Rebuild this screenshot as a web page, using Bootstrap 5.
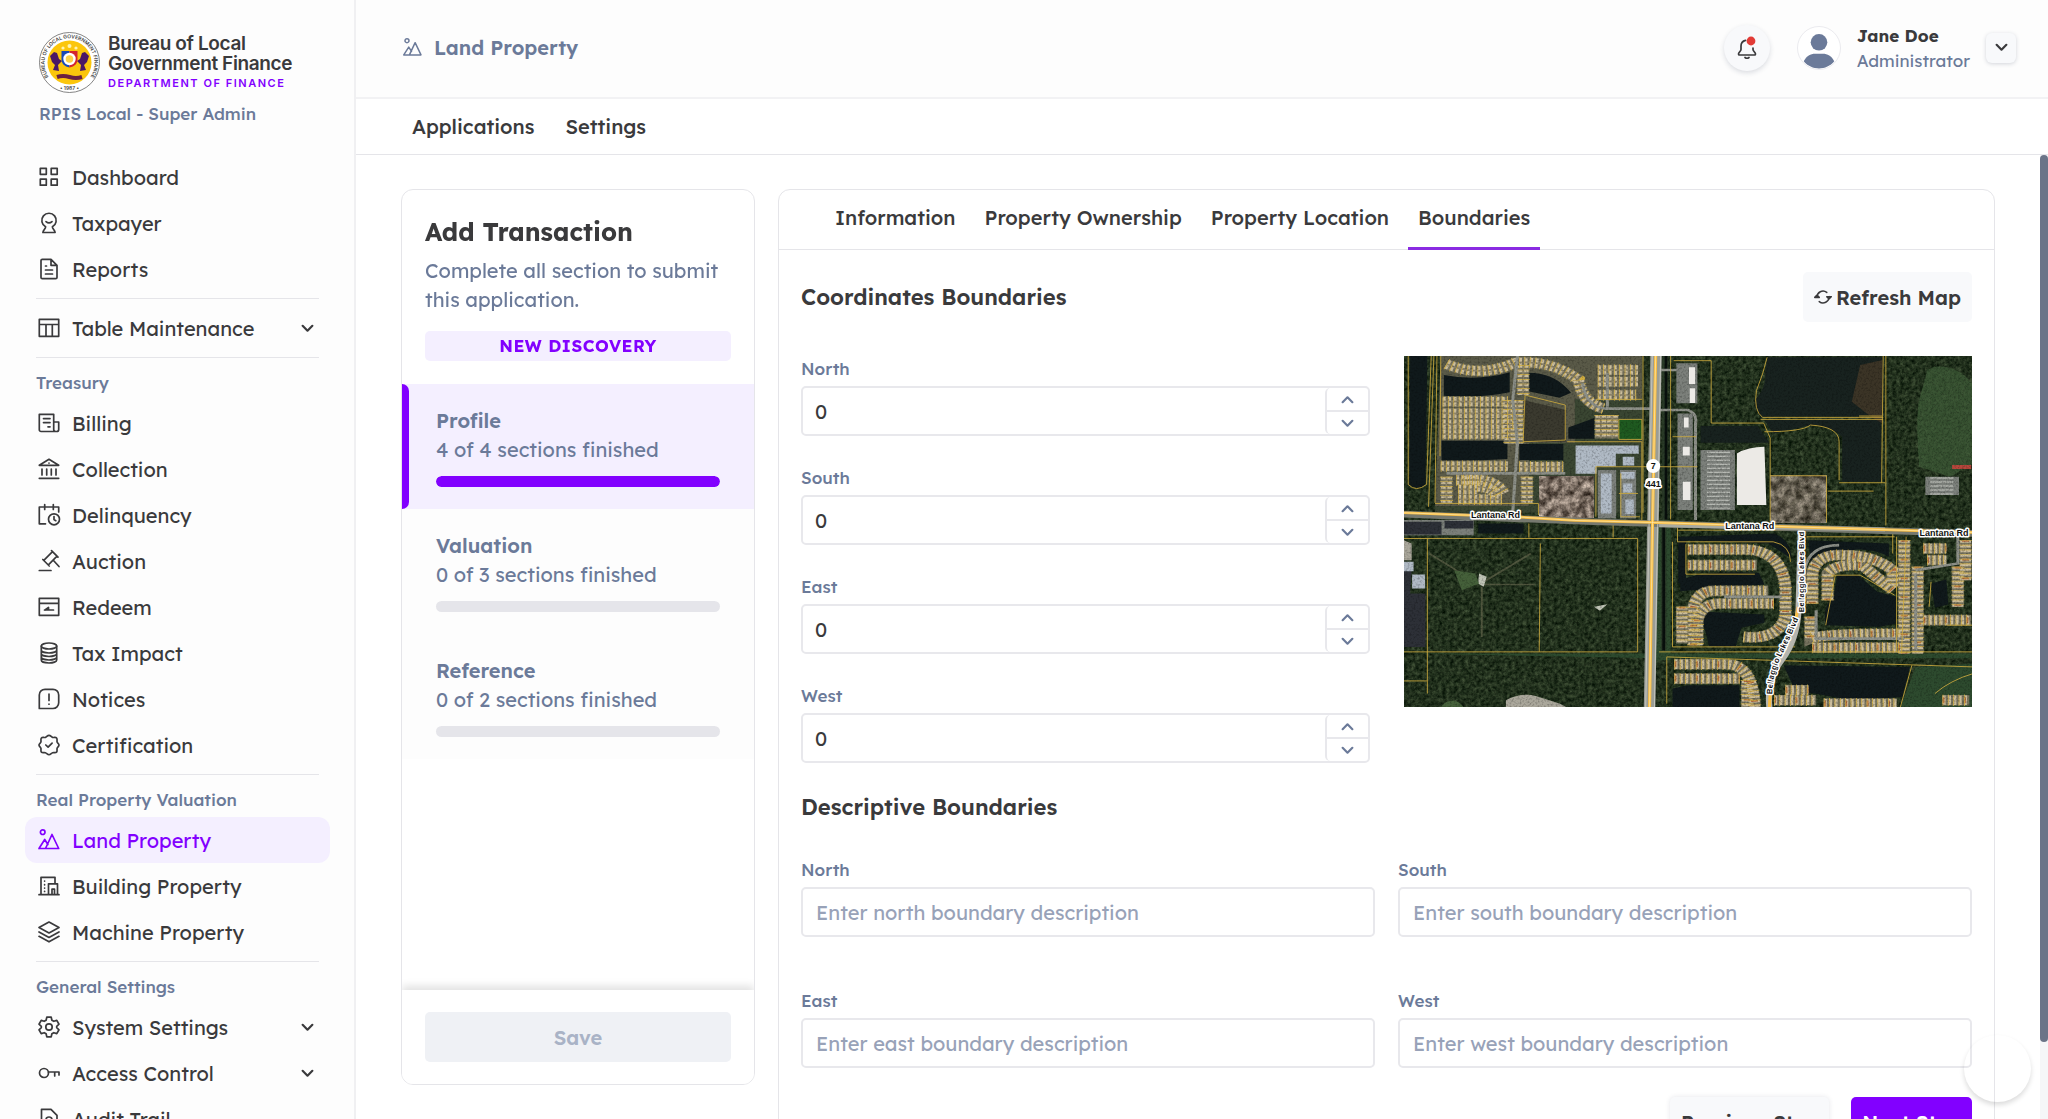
<!DOCTYPE html>
<html lang="en">
<head>
<meta charset="utf-8">
<meta name="viewport" content="width=device-width, initial-scale=1">
<title>Land Property</title>
<link href="https://cdn.jsdelivr.net/npm/bootstrap@5.3.0/dist/css/bootstrap.min.css" rel="stylesheet">
<style>
:root{--ink:#3a3a3c;--slate:#6b7a99;--violet:#8200ff;--tint:#f4efff;--line:#e5e5e9;--soft:#fdfdfd}
body{font-family:Lexend,Inter,"Liberation Sans",sans-serif;font-size:20px;line-height:29px;color:var(--ink);background:#fff}
button{font-family:inherit}
.shell{height:100vh}
.ico{width:24px;height:24px;flex:none;fill:none;stroke:currentColor;stroke-width:1.7;stroke-linecap:round;stroke-linejoin:round}
/* sidebar */
.side{width:356px;flex:none;background:var(--soft);border-right:2px solid #f0f0f2;overflow:hidden;padding:32px 24px 0 25px}
.brand{padding-left:14px;height:122px}
.brand-name{font-family:Inter,"Liberation Sans",sans-serif;font-size:19px;line-height:20px;font-weight:600;letter-spacing:-.02em;white-space:nowrap}
.brand-sub{font-family:Inter,"Liberation Sans",sans-serif;font-size:11px;line-height:18px;font-weight:600;letter-spacing:.14em;color:var(--violet);white-space:nowrap}
.role{font-size:17px;line-height:22px;font-weight:500;color:var(--slate);margin-top:10px}
.side-link{height:46px;padding:0 16px 0 12px;gap:11px;border-radius:12px;color:var(--ink);text-decoration:none;font-weight:400;border:0;background:none;width:100%;text-align:left}
.side-link.on{background:var(--tint);color:var(--violet)}
.side-rule{height:1px;margin:6px 11px;background:var(--line)}
.side-label{font-size:17px;line-height:26px;font-weight:500;color:var(--slate);padding:6px 11px 4px}
.chev{width:13px;height:13px;stroke-width:4}
/* top */
.top{height:99px;flex:none;background:var(--soft);border-bottom:2px solid #f2f2f4;padding:0 32px 2px 46px}
.top-ico{width:21px;height:21px;margin-right:11px;color:var(--slate)}
.top-title{font-weight:600;color:var(--slate)}
.round{width:46px;height:46px;border-radius:50%;border:0;background:#f8f9fb;box-shadow:0 2px 5px rgba(40,50,80,.16);color:var(--ink)}
.face{width:44px;height:44px;border-radius:50%;border:1px solid #ebebef;background:#fff;overflow:hidden;margin:0 16px 0 27px}
.who{font-size:17px;line-height:25px}
.mini{width:30px;height:30px;border-radius:6px;border:0;background:#f8f9fb;box-shadow:0 1px 4px rgba(40,50,80,.2);color:var(--ink)}
.sub{height:56px;flex:none;border-bottom:1px solid var(--line);padding:0 56px;gap:31px}
.sub a,.tabs a{color:var(--ink);text-decoration:none;font-weight:500}
/* body */
.view{padding:34px 45px 34px;gap:23px;overflow-y:auto;scrollbar-width:none}
.view::-webkit-scrollbar{display:none}
.rail{width:8px;flex:none;background:#f5f6f8}
.thumb{height:92%;border-radius:4px;background:#6b7488}
.panel{background:#fff;border:1px solid var(--line);border-radius:12px}
.steps{width:354px;flex:none;height:100%;position:sticky;top:0;overflow:hidden}
.steps-head{padding:26px 23px 23px}
.steps-head h1{font-size:25px;line-height:32px;font-weight:700;margin:0 0 8px}
.muted{color:var(--slate)}
.pill{margin-top:17px;height:30px;line-height:30px;border-radius:5px;background:var(--tint);color:var(--violet);font-size:17px;font-weight:700;letter-spacing:.03em;text-align:center}
.step{height:125px;padding:22px 34px;background:var(--soft);color:var(--slate);text-decoration:none;display:block;position:relative}
.step:hover{color:var(--slate)}
.step.on{background:var(--tint)}
.step.on::before{content:"";position:absolute;left:0;top:0;bottom:0;width:7px;background:var(--violet);border-radius:0 7px 7px 0}
.step b{font-weight:600;display:block}
.meter{height:11px;margin-top:12px;border-radius:6px;background:#e5e5ea}
.meter .progress-bar{background:var(--violet);border-radius:6px}
.steps-foot{padding:22px 23px;box-shadow:0 -4px 8px rgba(0,0,0,.12);position:relative;background:#fff}
.act{height:50px;border:0;border-radius:5px;font-weight:600;font-size:20px;padding:0 11px;color:var(--ink);background:#f8f9fb;white-space:nowrap}
.act.save{background:#eff1f5;color:#a9b3c6}
.sync{width:18px;height:18px;stroke-width:2}
.tabs{height:60px;border-bottom:1px solid var(--line);padding:0 46px;gap:9px}
.tabs a{height:60px;line-height:56px;padding:0 10px;border-bottom:3px solid transparent}
.tabs a.on{border-color:#8a2be2}
.form-pane{padding:22px}
.head{font-size:22px;line-height:30px;font-weight:600;margin:0}
.head-next{margin-top:29px}
.lbl{display:block;font-size:17px;line-height:26px;font-weight:500;color:var(--slate);margin-bottom:4px}
.box,.box:focus{height:50px;border:2px solid #e8e8ec;border-radius:5px;font-size:20px;color:var(--ink);padding:0 13px;box-shadow:none}
.box::placeholder{color:#98a2b8;opacity:1}
.num input{border:0;outline:0;height:100%;appearance:textfield;-moz-appearance:textfield;min-width:0;background:none;color:var(--ink)}
.num input::-webkit-inner-spin-button{appearance:none;display:none}
.box.num{padding:0 0 0 12px}
.spin{width:43px;flex:none;border-left:2px solid #e8e8ec;border-radius:5px 0 0 5px}
.spin button{border:0;background:none;color:var(--slate);padding:0}
.spin button+button{border-top:2px solid #e8e8ec}
.coords{gap:34px;margin-top:34px}
.coords>*{flex:1 1 0;min-width:0}
.stack{gap:29px}
.desc{display:grid;grid-template-columns:1fr 1fr;column-gap:23px;row-gap:51px;margin-top:35px}
.ends{gap:22px;margin-top:29px}
.next{background:var(--violet);color:#fff;min-width:118px}
.prev{box-shadow:0 0 5px rgba(40,50,80,.12);min-width:158px}
.bubble{position:fixed;right:17px;bottom:17px;width:67px;height:67px;border-radius:50%;border:0;background:transparent;box-shadow:0 3px 5px rgba(0,0,0,.14)}
/* map */
.map{width:100%;display:block;height:auto}
.map .lot{fill:none;stroke:#c9a83e;stroke-width:2.4}
.map .water{fill:#10191b}
.map text{font-family:"Liberation Sans",Arial,sans-serif;font-weight:700;font-size:9px;fill:#111;stroke:#fff;stroke-width:3px;paint-order:stroke;stroke-linejoin:round}
.map .street{font-size:8px}
</style>
<script src="https://cdn.jsdelivr.net/npm/bootstrap@5.3.0/dist/js/bootstrap.bundle.min.js"></script>
</head>
<body>
<svg class="d-none" aria-hidden="true">
 <symbol id="i-dash" viewBox="0 0 24 24"><path d="M3.3 3.3h6v6h-6zM14.2 3.3h6v6h-6zM3.3 14.2h6v6h-6zM14.2 14.2h6v6h-6z"/></symbol>
 <symbol id="i-tax" viewBox="0 0 24 24"><path d="M8.6 15.8a7.2 7.2 0 1 1 6.8 0c0 2.2 2.2 2.5 2.7 5.7H5.900c.5-3.200 2.700-3.500 2.700-5.700zM9 10.600q3 2.600 6 0"/></symbol>
 <symbol id="i-file" viewBox="0 0 24 24"><path d="M14 2.300H5.300a1.300 1.300 0 0 0-1.300 1.300v16.800a1.300 1.300 0 0 0 1.300 1.300h13.400a1.300 1.300 0 0 0 1.300-1.300V8.300zM14 2.300v6h6M8.500 9h1M8.500 13h7M8.500 17h7"/></symbol>
 <symbol id="i-table" viewBox="0 0 24 24"><path d="M2.300 3.300h19.400v17H2.300zM2.300 8.500h19.400M9 8.500v11.800M15.300 8.500v11.800"/></symbol>
 <symbol id="i-bill" viewBox="0 0 24 24"><path d="M17 20.500H4a1.700 1.700 0 0 1-1.700-1.700V3.300h14.400v14.900M16.700 11h5v7.500a2 2 0 0 1-2 2h-1a2 2 0 0 1-2-2zM6.500 7.600h6.500M6.500 11.600h6.500M11 15.800h2"/></symbol>
 <symbol id="i-bank" viewBox="0 0 24 24"><path d="M2.300 8.300 12 2.300l9.700 6zM2.300 21.300h19.400M5 12v6M9.700 12v6M14.300 12v6M19 12v6M12 6v.1"/></symbol>
 <symbol id="i-cal" viewBox="0 0 24 24"><path d="M8.500 20.800H2.300V4h19.400v5M7.700 1.500v5M16.300 1.500v5M2.300 4v3"/><circle cx="17" cy="16.300" r="5.500"/><path d="M17 13.500v3l1.800 1.200"/></symbol>
 <symbol id="i-gavel" viewBox="0 0 24 24"><path d="M2.300 21.500H14M14.500 1.700l6.500 6.500M5.800 10.500l6.500 6.500M15.500 2.700l-8.700 8.700M20 7.200l-8.600 8.600M16.500 11.500l5.500 6"/></symbol>
 <symbol id="i-redeem" viewBox="0 0 24 24"><path d="M2.300 3.300h19.400v17H2.300zM2.300 8.300h19.400M7.500 15h9M8 15l3.500-2.500V15"/></symbol>
 <symbol id="i-coins" viewBox="0 0 24 24"><ellipse cx="12" cy="5" rx="7.700" ry="3"/><path d="M4.300 5v14c0 1.700 3.400 3 7.700 3s7.700-1.300 7.700-3V5M4.300 9c0 1.700 3.400 3 7.700 3s7.700-1.300 7.700-3M4.300 12.500c0 1.700 3.400 3 7.700 3s7.700-1.300 7.700-3M4.300 16c0 1.700 3.400 3 7.700 3s7.700-1.300 7.700-3"/></symbol>
 <symbol id="i-note" viewBox="0 0 24 24"><path d="M2.300 21.500V8a5.700 5.700 0 0 1 5.700-5.700h8A5.700 5.700 0 0 1 21.700 8v7.800a5.700 5.700 0 0 1-5.700 5.700zM12 7v6.500M12 17v.2"/></symbol>
 <symbol id="i-cert" viewBox="0 0 24 24"><path d="M12 2.300c1.600 0 2.300 1.700 3.600 2.100 1.500.4 3-.5 4 .6s.1 2.600.5 4c.4 1.300 1.900 1.600 1.900 3s-1.500 1.900-1.900 3.200c-.4 1.400.5 2.900-.5 3.900s-2.500.2-4 .6c-1.300.4-2 2-3.600 2s-2.300-1.600-3.600-2c-1.500-.4-3 .4-4-.6s-.1-2.500-.5-3.900C3.500 13.900 2 13.500 2 12s1.500-1.700 1.900-3c.4-1.400-.5-2.900.5-4s2.500-.2 4-.6C9.700 4 10.400 2.300 12 2.300zM8.800 12l2.300 2.200 4-4"/></symbol>
 <symbol id="i-land" viewBox="0 0 24 24"><circle cx="5.700" cy="4.200" r="2.300"/><path d="M2 20.500l5.700-9 3.200 5M8.500 20.500l6.500-14 6.700 14zM2 20.500h10"/></symbol>
 <symbol id="i-build" viewBox="0 0 24 24"><path d="M2 20.700h20M4 20.700V3.300h14v6M11.500 20.700V9.800h9v10.900M15 20.700v-5.500h2.500v5.500M7.600 7v.1M7.600 10.700v.1M7.600 14v.1M7.600 17.300v.1"/></symbol>
 <symbol id="i-layers" viewBox="0 0 24 24"><path d="M12 2l10 5.500-10 5.500L2 7.500zM2 12l10 5.500L22 12M2 16.300l10 5.500 10-5.500"/></symbol>
 <symbol id="i-gear" viewBox="0 0 24 24"><circle cx="12" cy="12" r="3.200"/><path d="M9.800 2.200h4.400l.7 3 1.900 1.100 3-.9 2.200 3.800-2.300 2.100v1.400l2.300 2.100-2.200 3.800-3-.9-1.900 1.100-.7 3H9.800l-.7-3-1.900-1.100-3 .9L2 14.800l2.300-2.100v-1.400L2 9.200l2.200-3.800 3 .9 1.900-1.100z"/></symbol>
 <symbol id="i-key" viewBox="0 0 24 24"><circle cx="7" cy="12" r="4.500"/><path d="M11.500 11H22v3M17.700 11v4"/></symbol>
 <symbol id="i-audit" viewBox="0 0 24 24"><path d="M14 2.300H4.500v19.400H20V8.300z"/><circle cx="12" cy="13" r="3"/></symbol>
 <symbol id="i-down" viewBox="0 0 24 24"><path d="M3 7l9 9 9-9"/></symbol>
 <symbol id="i-up" viewBox="0 0 24 24"><path d="M3 17l9-9 9 9"/></symbol>
 <symbol id="i-sync" viewBox="0 0 24 24"><path d="M4 12.500a8 8 0 0 1 13-6.600M20 11.500a8 8 0 0 1-13 6.600M1 12.500l3-3 3 3zM17 11.500l3 3 3-3z"/></symbol>
</svg>

<div class="shell d-flex overflow-hidden">
 <aside class="side">
  <div class="brand">
   <div class="d-flex align-items-center gap-2">
    <svg width="61" height="61" viewBox="0 0 61 61" role="img" aria-label="Bureau seal">
     <defs><path id="ringTop" d="M14 50A25 25 0 1 1 47 50"/></defs>
     <circle cx="30.500" cy="30.500" r="30" fill="#fff" stroke="#666" stroke-width=".8"/>
     <circle cx="30.500" cy="30.500" r="22" fill="#fbc60c"/>
     <g font-family="Inter,sans-serif" font-weight="600" fill="#444"><text font-size="5"><textPath href="#ringTop" startOffset="50%" text-anchor="middle">BUREAU OF LOCAL GOVERNMENT FINANCE</textPath></text><text x="30.500" y="58" font-size="5" text-anchor="middle">• 1987 •</text></g>
     <g fill="#fff3b0"><circle cx="30.500" cy="14" r="2"/><circle cx="24" cy="16" r="1.600"/><circle cx="37" cy="16" r="1.600"/></g>
     <path fill="#4a1766" d="M11 24l4-4 3 1 2 6 3 2-4 4 1 6-6-1 2-5-3-3zM50 24l-4-4-3 1-2 6-3 2 4 4-1 6 6-1-2-5 3-3z"/>
     <path fill="#1849b8" d="M22.500 19h8v16.500c-5-1-8-4-8-8z"/><path fill="#d3232e" d="M30.500 19h8v8.500c0 4-3 7-8 8z"/>
     <circle cx="30.500" cy="27" r="6.200" fill="#fff"/><circle cx="30.500" cy="27" r="3.800" fill="#fbd34a"/>
     <path d="M18 45q6-2 12.500 0t12.500 0" fill="none" stroke="#6a2140" stroke-width="4"/>
    </svg>
    <div><div class="brand-name">Bureau of Local<br>Government Finance</div><div class="brand-sub">DEPARTMENT OF FINANCE</div></div>
   </div>
   <div class="role">RPIS Local - Super Admin</div>
  </div>
  <nav>
   <a class="side-link d-flex align-items-center" href="#"><svg class="ico"><use href="#i-dash"/></svg>Dashboard</a>
   <a class="side-link d-flex align-items-center" href="#"><svg class="ico"><use href="#i-tax"/></svg>Taxpayer</a>
   <a class="side-link d-flex align-items-center" href="#"><svg class="ico"><use href="#i-file"/></svg>Reports</a>
   <div class="side-rule"></div>
   <button class="side-link d-flex align-items-center" type="button"><svg class="ico"><use href="#i-table"/></svg>Table Maintenance<svg class="ico chev ms-auto"><use href="#i-down"/></svg></button>
   <div class="side-rule"></div>
   <div class="side-label">Treasury</div>
   <a class="side-link d-flex align-items-center" href="#"><svg class="ico"><use href="#i-bill"/></svg>Billing</a>
   <a class="side-link d-flex align-items-center" href="#"><svg class="ico"><use href="#i-bank"/></svg>Collection</a>
   <a class="side-link d-flex align-items-center" href="#"><svg class="ico"><use href="#i-cal"/></svg>Delinquency</a>
   <a class="side-link d-flex align-items-center" href="#"><svg class="ico"><use href="#i-gavel"/></svg>Auction</a>
   <a class="side-link d-flex align-items-center" href="#"><svg class="ico"><use href="#i-redeem"/></svg>Redeem</a>
   <a class="side-link d-flex align-items-center" href="#"><svg class="ico"><use href="#i-coins"/></svg>Tax Impact</a>
   <a class="side-link d-flex align-items-center" href="#"><svg class="ico"><use href="#i-note"/></svg>Notices</a>
   <a class="side-link d-flex align-items-center" href="#"><svg class="ico"><use href="#i-cert"/></svg>Certification</a>
   <div class="side-rule"></div>
   <div class="side-label">Real Property Valuation</div>
   <a class="side-link on d-flex align-items-center" href="#" aria-current="page"><svg class="ico"><use href="#i-land"/></svg>Land Property</a>
   <a class="side-link d-flex align-items-center" href="#"><svg class="ico"><use href="#i-build"/></svg>Building Property</a>
   <a class="side-link d-flex align-items-center" href="#"><svg class="ico"><use href="#i-layers"/></svg>Machine Property</a>
   <div class="side-rule"></div>
   <div class="side-label">General Settings</div>
   <button class="side-link d-flex align-items-center" type="button"><svg class="ico"><use href="#i-gear"/></svg>System Settings<svg class="ico chev ms-auto"><use href="#i-down"/></svg></button>
   <button class="side-link d-flex align-items-center" type="button"><svg class="ico"><use href="#i-key"/></svg>Access Control<svg class="ico chev ms-auto"><use href="#i-down"/></svg></button>
   <a class="side-link d-flex align-items-center" href="#"><svg class="ico"><use href="#i-audit"/></svg>Audit Trail</a>
  </nav>
 </aside>

 <div class="d-flex flex-column flex-grow-1 overflow-hidden">
  <header class="top d-flex align-items-center">
   <svg class="ico top-ico"><use href="#i-land"/></svg><span class="top-title">Land Property</span>
   <button class="round ms-auto d-flex align-items-center justify-content-center p-0" type="button" aria-label="Notifications"><svg class="ico" viewBox="0 0 24 24"><path d="M10.500 4.300C7.500 5 6 7.500 6 10v3.500c0 1.500-2.500 3-2.500 4.500 0 .8.500 1 1 1h15c.5 0 1-.2 1-1 0-1.500-2.500-3-2.500-4.500V12M10 21.500q2 1.500 4 0"/><circle cx="16" cy="5" r="4.400" fill="#e23b36" stroke="none"/></svg></button>
   <svg class="face" viewBox="0 0 44 44" role="img" aria-label="Jane Doe"><g fill="#6b7a99"><circle cx="22" cy="16" r="8.700"/><path d="M6 36c3-6 7-8 12-8h8c5 0 9 2 12 8-8 10-24 10-32 0z"/></g></svg>
   <div class="who"><div class="fw-bold">Jane Doe</div><div class="muted">Administrator</div></div>
   <button class="mini ms-3 d-flex align-items-center justify-content-center p-0" type="button" aria-label="Account menu"><svg class="ico chev"><use href="#i-down"/></svg></button>
  </header>
  <nav class="sub d-flex align-items-center"><a href="#">Applications</a><a href="#">Settings</a></nav>

  <div class="d-flex flex-grow-1 overflow-hidden">
   <main class="view d-flex align-items-start flex-grow-1">
    <section class="panel steps d-flex flex-column">
     <div class="steps-head">
      <h1>Add Transaction</h1>
      <div class="muted">Complete all section to submit this application.</div>
      <div class="pill">NEW DISCOVERY</div>
     </div>
     <a class="step on" href="#"><b>Profile</b>4 of 4 sections finished<div class="progress meter"><div class="progress-bar" style="width:100%"></div></div></a>
     <a class="step" href="#"><b>Valuation</b>0 of 3 sections finished<div class="progress meter"><div class="progress-bar" style="width:0%"></div></div></a>
     <a class="step" href="#"><b>Reference</b>0 of 2 sections finished<div class="progress meter"><div class="progress-bar" style="width:0%"></div></div></a>
     <div class="steps-foot mt-auto"><button class="act save w-100" type="button" disabled>Save</button></div>
    </section>

    <section class="panel flex-grow-1">
     <nav class="tabs d-flex"><a href="#">Information</a><a href="#">Property Ownership</a><a href="#">Property Location</a><a class="on" href="#" aria-current="page">Boundaries</a></nav>
     <form class="form-pane">
      <div class="d-flex align-items-center justify-content-between">
       <h2 class="head">Coordinates Boundaries</h2>
       <button class="act d-flex align-items-center gap-1" type="button"><svg class="ico sync"><use href="#i-sync"/></svg>Refresh Map</button>
      </div>
      <div class="coords d-flex align-items-start">
       <div class="stack d-flex flex-column">
        <div><label class="lbl" for="cn">North</label><div class="box num d-flex"><input class="flex-grow-1 p-0" id="cn" type="number" value="0"><div class="spin d-flex flex-column"><button class="flex-fill d-flex align-items-center justify-content-center" type="button" aria-label="Increase north"><svg class="ico chev"><use href="#i-up"/></svg></button><button class="flex-fill d-flex align-items-center justify-content-center" type="button" aria-label="Decrease north"><svg class="ico chev"><use href="#i-down"/></svg></button></div></div></div>
        <div><label class="lbl" for="cs">South</label><div class="box num d-flex"><input class="flex-grow-1 p-0" id="cs" type="number" value="0"><div class="spin d-flex flex-column"><button class="flex-fill d-flex align-items-center justify-content-center" type="button" aria-label="Increase south"><svg class="ico chev"><use href="#i-up"/></svg></button><button class="flex-fill d-flex align-items-center justify-content-center" type="button" aria-label="Decrease south"><svg class="ico chev"><use href="#i-down"/></svg></button></div></div></div>
        <div><label class="lbl" for="ce">East</label><div class="box num d-flex"><input class="flex-grow-1 p-0" id="ce" type="number" value="0"><div class="spin d-flex flex-column"><button class="flex-fill d-flex align-items-center justify-content-center" type="button" aria-label="Increase east"><svg class="ico chev"><use href="#i-up"/></svg></button><button class="flex-fill d-flex align-items-center justify-content-center" type="button" aria-label="Decrease east"><svg class="ico chev"><use href="#i-down"/></svg></button></div></div></div>
        <div><label class="lbl" for="cw">West</label><div class="box num d-flex"><input class="flex-grow-1 p-0" id="cw" type="number" value="0"><div class="spin d-flex flex-column"><button class="flex-fill d-flex align-items-center justify-content-center" type="button" aria-label="Increase west"><svg class="ico chev"><use href="#i-up"/></svg></button><button class="flex-fill d-flex align-items-center justify-content-center" type="button" aria-label="Decrease west"><svg class="ico chev"><use href="#i-down"/></svg></button></div></div></div>
       </div>
       <svg class="map" viewBox="0 0 568 351" role="img" aria-label="Aerial parcel map">
        <defs>
         <filter id="wood" x="0" y="0" width="1" height="1" color-interpolation-filters="sRGB"><feTurbulence type="fractalNoise" baseFrequency=".26" numOctaves="4" seed="4"/><feColorMatrix values=".34 0 0 0 -.03  .36 0 0 0 .02  .28 0 0 0 -.02  0 0 0 0 1"/></filter>
         <filter id="dirt" x="0" y="0" width="1" height="1" color-interpolation-filters="sRGB"><feTurbulence type="fractalNoise" baseFrequency=".12" numOctaves="4" seed="9"/><feColorMatrix values="1.100 0 0 0 -.03  1.050 0 0 0 -.06  1 0 0 0 -.08  0 0 0 0 1"/></filter>
         <filter id="grain" x="0" y="0" width="1" height="1" color-interpolation-filters="sRGB"><feTurbulence type="fractalNoise" baseFrequency=".5" numOctaves="2" seed="2"/><feColorMatrix values="0 0 0 0 0  0 0 0 0 0  0 0 0 0 0  3 0 0 0 -1.350"/></filter>
         <clipPath id="frame"><path d="M0 0h568v351H0z"/></clipPath>
         <path id="blvd" d="M368 338Q368 318 378 298T400 248"/>
         <path id="blvd2" d="M400 256V168"/>
         <path id="northHomes" d="M145 72Q230 115 325 68Q420 60 490 120Q500 190 555 205M540 90h105M540 125h105M540 165h100M135 185h170M135 220h190M135 252h190M135 282h170M345 75v90M330 180v130M310 180v130M130 378h175M335 380h115M145 410v80M170 420h60M175 448h50M175 478h115M190 420q80-10 105 40M225 440q40 0 50 30M548 225v70M578 225v70M355 410v80"/>
         <path id="southHomes" d="M775 628h150Q1020 630 1030 740V830Q1010 900 920 890M775 675h180M790 915V800Q800 750 850 752H985M1000 790H860Q810 790 800 840V915M760 800v110M740 972h140Q945 975 950 1100M740 1015h170M1100 790V700Q1110 640 1180 645Q1260 645 1310 690V740M1140 780V700Q1160 670 1230 675L1310 750M1095 830V895Q1130 880 1330 880M1100 922h230M1340 600v340M1375 680v260M1390 625h60M1400 660h50M1480 680v120M1500 600v120M1390 840h125M1000 1080h110M1030 1050h60M1130 1090h190M1440 1080h70M930 1020v80"/>
        </defs>
        <g clip-path="url(#frame)">
        <path filter="url(#wood)" d="M0 0h568v351H0z"/>
        <g transform="scale(.3827 .3333) translate(-34 -48)">
         <path fill="#3f5c38" opacity=".75" d="M1400 90q40-25 90 10l29 30v240l-60 40-80-30q-10-150 0-200z"/>
         <path fill="#2d4a2e" d="M690 540h40v420h-40zM34 940h1490v14H690zM1370 980l150-10v130h-190z"/><path fill="#3a4632" d="M130 48h528v470H115z"/>
         <path fill="#5a5a48" d="M130 48h525v130H480v130H360v190H115z"/>
         <path class="water" d="M50 48h45l-5 385q-20 20-42 0zM138 105q90 20 172-8v60q-90 20-172 10zM358 98q70 0 112 60l-30 15-85-20zM132 302h172v55q-90 6-172 4zM335 312h115v48H335zM463 262l68-28v62h-68zM228 550h118v30H228z"/>
         <path fill="#18221f" d="M982 52h303v178H965q-20-30-14-50 30-40 26-80zM975 240h305v185H1178V290q-50-50-120-25l-60 15zM808 258h150l30 50H808z"/>
         <path fill="#3b3426" d="M1225 75l58-15v190l-30-20-50-45z"/>
         <path fill="#3b3a2f" d="M345 180l112 30v95H345z"/><path fill="#1f5a20" d="M595 238h60v60h-60z"/>
         <path class="water" d="M750 590l250-10q45 20 45 75l-60-45-215-10v130h-20zM755 720q60-30 205-22l15 35-220 20zM820 815l155 8v25l-60 15-15 55h-70q-10-60-25-85zM1090 600l210 10v40q-80-50-205 15zM1165 705h55l50 50 50 15v80l-45 10-140-5q-10-60 20-80zM1410 730l40-12 5 75-35 10zM735 1045l40-10h135v70H735zM1025 975l330 5-20 90-130 10-150-30z"/>
         <path fill="none" stroke="#2a3b28" stroke-width="14" d="M715 48v490M712 560v370"/>
         <path fill="none" stroke="#080f0c" stroke-width="7" d="M718 48v490M712 560v370"/>
        </g>
        <path filter="url(#dirt)" d="M135 120h54v41h-54z"/><path filter="url(#dirt)" opacity=".75" d="M366 119h56v47h-56z"/>
        <g transform="scale(.3827 .3333) translate(-34 -48)" fill="none">
         <g stroke="#77745f" stroke-width="32"><use href="#northHomes"/><use href="#southHomes"/></g>
         <g stroke="#cbbd9c" stroke-width="28" stroke-dasharray="8 6"><use href="#northHomes"/><use href="#southHomes"/></g>
         <g stroke="#8a8269" stroke-width="5"><use href="#northHomes"/></g>
         <g stroke="#b26a3e" stroke-width="18" stroke-dasharray="5 51"><use href="#southHomes"/></g>
         <g stroke="#d0ad40" stroke-width="34" stroke-dasharray="2 12"><use href="#northHomes"/><use href="#southHomes"/></g>
         <path stroke="#8d9088" stroke-width="8" d="M330 48L318 180 330 310 318 515M500 130Q510 200 560 206H680M565 100v105M700 210h75q25 10 20 40v290M700 90h50M145 400h310M1080 770V690q10-75 90-75M1110 810v85h230M870 770h150M1480 590v80l-110 20M1370 700v230"/>
        </g>
        <g transform="scale(.3827 .3333) translate(-34 -48)">
         <path fill="#7c807b" d="M745 70h55v120h-55zM748 220h40v290h-40zM808 330h90v180h-90zM540 390h48v145h-48zM598 390h42v145h-42zM34 540h182v45H34zM1395 410h88v55h-88z"/>
         <path fill="#2d3037" d="M34 545h98v38H34zM140 543h75v22h-75zM50 760h40v160H34V690h20z"/>
         <path fill="none" stroke="#c9cbc6" stroke-width="60" stroke-dasharray="3 9" d="M855 335v170M1438 412v52"/>
         <path fill="#b0bac5" d="M482 316h165v25h-60v38h-50v22h-55zM548 400h28v120h-28zM605 350h30v26h-30zM600 396h36v20h-36zM606 430h24v28h-24zM612 478h22v44h-22zM34 665h25v28H34zM55 703h34v42H55z"/>
         <path fill="#b5473c" d="M1465 375h50v12h-50z"/><path fill="#aaa79b" d="M300 1080q40-25 80-12l60 22 20 12H300zM34 600l20 10v50H34z"/>
         <path stroke="#5d6047" stroke-width="5" fill="none" opacity=".8" d="M100 640l70 50 65 40 130-90M237 740v150M235 733h140"/><path fill="#bfc3b5" d="M230 700l20 10-8 30-15-10zM530 800l35-8-20 20z"/>
         <path fill="#45603a" d="M165 690l55 10 10 30-45 20zM130 1101q30-40 60 0z"/>
        </g>
        <path filter="url(#grain)" opacity=".22" d="M0 0h568v351H0z"/>
        <g transform="scale(.3827 .3333) translate(-34 -48)">
         <path fill="#eceae6" d="M903 340q30-20 72-20l5 175h-77zM778 82h16v50h-16zM780 145h14v44h-14zM762 320h18v26h-18zM762 425h20v55h-20zM765 232h12v30h-12z"/>
         <g class="lot"><path d="M45 48v385q20 25 48 0L105 48M112 48L98 500M120 48l-5 440M130 48l-2 300M34 595h610V935H34M95 595v465M390 610L387 935M34 1022h60M115 490h270v35M360 550v42M580 550v42M658 48v470M655 178H535M350 165l105 30v105l-110 5zM460 305h195v235M535 380v150M595 238h60v60h-60zM535 380h265M730 48v490M738 62h98v187h137l17 45v250M735 290h62M982 52q-10 50-28 100-8 60 16 80h315M965 238h320M975 275q100 0 120-20 75 5 75 50v115M1285 48l-4 380M1292 48v508M1222 228h60M990 407h147v140M1140 453h120M1170 428h120M748 560v45h250q45 10 45 60M748 570h562v70M735 605v315h320M770 612v90h180M1085 590h230M1320 590v345M1345 590l-12 350M700 935h820M720 950l800 30M720 950v140M1360 975l-30 125M1420 1060q40-40 100-60M1410 725l-5 75M1450 855h69M1150 705h75l90 60M1160 705l-25 150M600 400v130h50M595 460h50"/></g>
         <g fill="none"><path stroke="#9a9d95" stroke-width="30" d="M692 48L675 1101"/><path stroke="#76796f" stroke-width="20" d="M34 522L530 545 1519 580"/><path stroke="#a9aaa0" stroke-width="12" d="M700 555L1290 568"/>
         <path stroke="#b5b5ae" stroke-width="16" d="M1070 570L1064 810Q1060 900 1020 960T988 1101"/>
         <path stroke="#dcdcd6" opacity=".6" stroke-width="3" d="M682 48L665 1101M704 48L688 1101"/>
         <path stroke="#f7bd45" stroke-width="8" d="M691 48L683 540 675 1101M34 518L340 531 480 541 680 547 1519 577M1063 800l-8 50M990 1060l-2 41"/><path stroke="#ffe9a8" stroke-width="2" d="M691 48L683 540 675 1101M34 518L340 531 480 541 680 547 1519 577"/></g>
        </g>
        <circle cx="249" cy="110" r="7" fill="#fff"/><rect x="241" y="122" width="16" height="11" rx="4" fill="#fff"/>
        <text x="249" y="113" text-anchor="middle">7</text><text x="249" y="131" text-anchor="middle">441</text>
        <text x="67" y="162">Lantana Rd</text><text x="321" y="173">Lantana Rd</text><text x="515" y="180">Lantana Rd</text>
        <text class="street"><textPath href="#blvd2">Bellaggio Lakes Blvd</textPath></text><text class="street"><textPath href="#blvd">Bellaggio Lakes Blvd</textPath></text>
        </g>
       </svg>
      </div>
      <h2 class="head head-next">Descriptive Boundaries</h2>
      <div class="desc">
       <div><label class="lbl" for="dn">North</label><input class="form-control box" id="dn" placeholder="Enter north boundary description"></div>
       <div><label class="lbl" for="ds">South</label><input class="form-control box" id="ds" placeholder="Enter south boundary description"></div>
       <div><label class="lbl" for="de">East</label><input class="form-control box" id="de" placeholder="Enter east boundary description"></div>
       <div><label class="lbl" for="dw">West</label><input class="form-control box" id="dw" placeholder="Enter west boundary description"></div>
      </div>
      <div class="ends d-flex justify-content-end"><button class="act prev" type="button">Previous Step</button><button class="act next" type="button">Next Step</button></div>
     </form>
    </section>
   </main>
   <div class="rail" aria-hidden="true"><div class="thumb"></div></div>
  </div>
 </div>
</div>
<button class="bubble" type="button" aria-label="Support"></button>
</body>
</html>
